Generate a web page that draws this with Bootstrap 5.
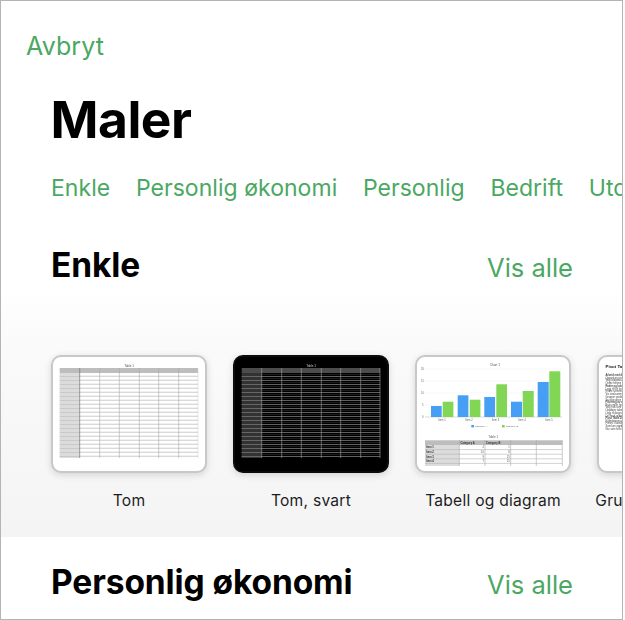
<!DOCTYPE html>
<html lang="no">
<head>
<meta charset="utf-8">
<title>Maler</title>
<link href="https://cdn.jsdelivr.net/npm/bootstrap@5.3.0/dist/css/bootstrap.min.css" rel="stylesheet">
<style>
html, body { margin: 0; background: #fff; overflow: hidden; }
body { font-family: Inter, "Liberation Sans", sans-serif; }
.frame { width: 623px; height: 620px; border: 1px solid #b4b4b4; overflow: hidden; background: #fff; }
.green-link { color: #4aa862; text-decoration: none; }
.cancel { font-size: 25px; line-height: 30px; margin: 30px 0 0 25px; align-self: flex-start; letter-spacing: .1px; }
.page-title { font-size: 51.5px; line-height: 62px; font-weight: 700; color: #000; margin: 27px 0 0 49.5px; letter-spacing: -.5px; }
.tabs { margin: 24px 0 0 50px; gap: 25.7px; flex-wrap: nowrap; font-size: 23px; line-height: 28px; white-space: nowrap; letter-spacing: .04px; }
.band { height: 335px; padding: 43px 0 0 50px; background: linear-gradient(#fff 0, #fff 26%, #fafafa 43%, #f4f4f4 100%); }
.head-row { padding-right: 49px; }
.sec-title { font-size: 33.5px; line-height: 40px; font-weight: 700; color: #000; margin: 0; letter-spacing: -.1px; }
.see-all { font-size: 25.5px; line-height: 32px; padding-top: 7px; }
.thumbs { gap: 26px; margin-top: 70px; }
.thumb-col { width: 156px; flex: 0 0 156px; }
.thumb { width: 156px; height: 118px; border: 2px solid #c8c8c8; border-radius: 10px; overflow: hidden; background: #fff; box-shadow: 0 2px 7px rgba(0,0,0,.14); }
.thumb svg { display: block; margin: -2px; width: 156px; height: 118px; flex: none; filter: blur(.4px); }
.thumb-dark { background: #000; border-color: #0c0c0c; }
.thumb-label { font-size: 15.6px; line-height: 20px; color: #1d1d1f; margin-top: 18px; display: flex; justify-content: center; white-space: nowrap; letter-spacing: .25px; }
.lower { padding: 25px 49px 0 50px; }
svg text { font-family: "Liberation Sans", sans-serif; }
</style>
</head>
<body>
<div class="frame d-flex flex-column">
  <a href="#" class="green-link cancel">Avbryt</a>
  <h1 class="page-title">Maler</h1>
  <nav class="nav tabs">
    <a href="#" class="green-link">Enkle</a>
    <a href="#" class="green-link">Personlig økonomi</a>
    <a href="#" class="green-link">Personlig</a>
    <a href="#" class="green-link">Bedrift</a>
    <a href="#" class="green-link">Utdanning</a>
  </nav>
  <section class="band">
    <div class="d-flex justify-content-between align-items-start head-row">
      <h2 class="sec-title">Enkle</h2>
      <a href="#" class="green-link see-all">Vis alle</a>
    </div>
    <div class="d-flex thumbs">
      <div class="thumb-col">
        <div class="card thumb">
          <svg viewBox="0 0 156 118">
            <defs>
              <pattern id="rowsL" width="10" height="4" patternUnits="userSpaceOnUse" y="18">
                <rect width="10" height="4" fill="#fff"/><rect y="2" width="10" height="1" fill="#f1f1f1"/><rect y="3.4" width="10" height=".6" fill="#c0c0c0"/>
              </pattern>
              <pattern id="rowsLG" width="10" height="4" patternUnits="userSpaceOnUse" y="18">
                <rect width="10" height="4" fill="#dcdcdc"/><rect y="3.4" width="10" height=".6" fill="#bcbcbc"/>
              </pattern>
            </defs>
            <text x="78" y="12" font-size="3" text-anchor="middle" fill="#555">Table 1</text>
            <rect x="8.7" y="18" width="138.3" height="85" fill="url(#rowsL)"/>
            <rect x="8.7" y="18" width="20" height="85" fill="url(#rowsLG)"/>
            <rect x="8.7" y="13" width="138.3" height="5" fill="#bdbdbd"/>
            <g stroke="#a8a8a8" stroke-width=".6"><path d="M48.7 13V103M68.3 13V103M88.3 13V103M107.7 13V103M127.7 13V103"/></g>
            <path d="M28.7 13V103" stroke="#777" stroke-width=".7"/>
            <path d="M147 13V103" stroke="#ccc" stroke-width=".5"/>
          </svg>
        </div>
        <div class="thumb-label">Tom</div>
      </div>
      <div class="thumb-col">
        <div class="card thumb thumb-dark">
          <svg viewBox="0 0 156 118">
            <defs>
              <pattern id="rowsD" width="10" height="4" patternUnits="userSpaceOnUse" y="18">
                <rect width="10" height="4" fill="#000"/><rect y="1" width="10" height="1" fill="#1a1a1a"/><rect y="3.3" width="10" height=".7" fill="#8a8a8a"/>
              </pattern>
              <pattern id="rowsDG" width="10" height="4" patternUnits="userSpaceOnUse" y="18">
                <rect width="10" height="4" fill="#333"/><rect y="3.3" width="10" height=".7" fill="#7c7c7c"/>
              </pattern>
            </defs>
            <text x="78" y="12" font-size="3" text-anchor="middle" fill="#ccc">Table 1</text>
            <rect x="8.7" y="18" width="138.3" height="85" fill="url(#rowsD)"/>
            <rect x="8.7" y="18" width="20" height="85" fill="url(#rowsDG)"/>
            <rect x="8.7" y="13" width="138.3" height="5" fill="#4c4c4c"/>
            <g stroke="#a4a4a4" stroke-width=".6"><path d="M28.7 13V103M48.7 13V103M68.3 13V103M88.3 13V103M107.7 13V103M127.7 13V103M147 13V103"/></g>
          </svg>
        </div>
        <div class="thumb-label">Tom, svart</div>
      </div>
      <div class="thumb-col">
        <div class="card thumb">
          <svg viewBox="0 0 156 118">
            <text x="80" y="11" font-size="3" text-anchor="middle" fill="#555">Chart 1</text>
            <g stroke="#eee" stroke-width=".5"><path d="M10 14H147M10 26H147M10 38H147M10 50H147"/></g>
            <path d="M10 62H147" stroke="#c4c4c4" stroke-width=".6"/>
            <g font-size="2.6" fill="#666">
              <text x="6" y="15">20</text><text x="6" y="27">15</text><text x="6" y="39">10</text><text x="7" y="51">5</text><text x="7" y="63">0</text>
              <text x="27" y="66" text-anchor="middle">Item 1</text><text x="54" y="66" text-anchor="middle">Item 2</text><text x="80.5" y="66" text-anchor="middle">Item 3</text><text x="107" y="66" text-anchor="middle">Item 4</text><text x="134" y="66" text-anchor="middle">Item 5</text>
            </g>
            <g fill="#479ef5">
              <rect x="16" y="51" width="10.7" height="11"/><rect x="42.7" y="40.3" width="10.7" height="21.7"/><rect x="69.3" y="42" width="10.7" height="20"/><rect x="96" y="46.7" width="11" height="15.3"/><rect x="122.7" y="27" width="11" height="35"/>
            </g>
            <g fill="#82d656">
              <rect x="27.7" y="46.7" width="10.7" height="15.3"/><rect x="54.7" y="44.7" width="10.7" height="17.3"/><rect x="81.3" y="29.3" width="10.7" height="32.7"/><rect x="107.7" y="36" width="11" height="26"/><rect x="134.3" y="16.3" width="11" height="45.7"/>
            </g>
            <rect x="56.3" y="70" width="2.7" height="2.4" fill="#479ef5"/>
            <rect x="87" y="70" width="2.7" height="2.4" fill="#82d656"/>
            <g font-size="2.5" fill="#666"><text x="60" y="72.3">Category A</text><text x="90.7" y="72.3">Category B</text></g>
            <text x="78.3" y="83" font-size="3" text-anchor="middle" fill="#555">Table 1</text>
            <rect x="10" y="85.3" width="137.3" height="4.7" fill="#bdbdbd"/>
            <rect x="10" y="90" width="34.3" height="21" fill="#dcdcdc"/>
            <g stroke="#b4b4b4" stroke-width=".6"><path d="M10 94.6H147M10 99.2H147M10 103.8H147M10 108.4H147"/></g>
            <g stroke="#a8a8a8" stroke-width=".6"><path d="M44.3 85V111M70 85V111M95.7 85V111M121.3 85V111M147.3 85V111"/></g>
            <g font-size="2.7" font-weight="700" fill="#333">
              <text x="45.5" y="88.8">Category A</text><text x="71" y="88.8">Category B</text>
              <text x="11" y="93.4">Item 1</text><text x="11" y="98">Item 2</text><text x="11" y="102.6">Item 3</text><text x="11" y="107.2">Item 4</text>
            </g>
            <g font-size="2.6" fill="#555" text-anchor="end">
              <text x="69" y="93.4">4</text><text x="94.7" y="93.4">1</text><text x="69" y="98">10</text><text x="94.7" y="98">8</text><text x="69" y="102.6">9</text><text x="94.7" y="102.6">15</text><text x="69" y="107.2">7</text><text x="94.7" y="107.2">15</text>
            </g>
          </svg>
        </div>
        <div class="thumb-label">Tabell og diagram</div>
      </div>
      <div class="thumb-col">
        <div class="card thumb">
          <svg viewBox="0 0 156 118">
            <text x="8.5" y="13" font-size="4.4" font-weight="700" fill="#111">Pivot Table</text>
            <g font-size="2.6" fill="#444">
              <text x="8.5" y="21" font-weight="700">Arbeid med data</text>
              <text x="8.5" y="23.7">Opprett en pivottabell</text><text x="8.5" y="26.4">Velg kildedata her</text><text x="8.5" y="29.1">Ordne feltene dine</text>
              <text x="8.5" y="32" font-weight="700">Rader og kolonner</text>
              <text x="8.5" y="34.7">Legg til felt for rader</text><text x="8.5" y="37.4">Endre sorteringen</text><text x="8.5" y="40.1">Vis totalsummene</text><text x="8.5" y="42.8">Grupper verdiene</text><text x="8.5" y="45.5">Se oversikten her</text>
              <text x="8.5" y="48" font-weight="700">Filtrering av data</text>
              <text x="8.5" y="50.7">Bruk regler for visning</text><text x="8.5" y="53.4">Velg hva som vises</text><text x="8.5" y="56.1">Oppdater tabellen</text><text x="8.5" y="58.8">Legg til diagram</text><text x="8.5" y="61.5">Del med andre</text>
              <text x="8.5" y="64" font-weight="700">Pivot Table Data</text>
              <text x="8.5" y="66.7">Kildedataene dine</text><text x="8.5" y="69.4">Finnes i tabellen</text><text x="8.5" y="72.1">Som kan oppdateres</text><text x="8.5" y="74.8">Når som helst</text>
            </g>
          </svg>
        </div>
        <div class="thumb-label">Grunnleggende pivot</div>
      </div>
    </div>
  </section>
  <section class="lower d-flex justify-content-between align-items-start">
    <h2 class="sec-title">Personlig økonomi</h2>
    <a href="#" class="green-link see-all">Vis alle</a>
  </section>
</div>
<script src="https://cdn.jsdelivr.net/npm/bootstrap@5.3.0/dist/js/bootstrap.bundle.min.js"></script>
</body>
</html>
